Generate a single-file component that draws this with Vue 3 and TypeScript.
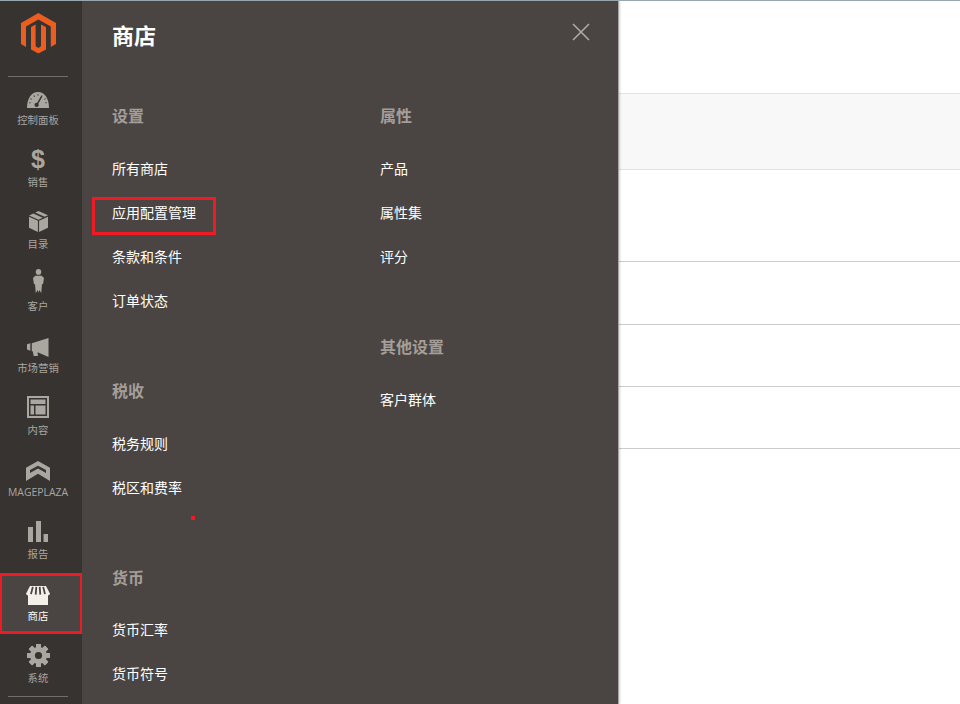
<script setup lang="ts">
const navItems = [
  { key: 'gauge', label: '控制面板', lift: 1 },
  { key: 'dollar', label: '销售', lift: 0 },
  { key: 'box', label: '目录', lift: 1 },
  { key: 'person', label: '客户', lift: 2 },
  { key: 'horn', label: '市场营销', lift: 0 },
  { key: 'layout', label: '内容', lift: 1 },
  { key: 'chevrons', label: 'MAGEPLAZA', lift: 0 },
  { key: 'bars', label: '报告', lift: 1 },
  { key: 'store', label: '商店', lift: 0 },
  { key: 'gear', label: '系统', lift: 0 },
]
const gearTeeth = [0, 45, 90, 135, 180, 225, 270, 315]
const columns = [
  [
    { title: '设置', links: ['所有商店', '应用配置管理', '条款和条件', '订单状态'] },
    { title: '税收', links: ['税务规则', '税区和费率'] },
    { title: '货币', links: ['货币汇率', '货币符号'] },
  ],
  [
    { title: '属性', links: ['产品', '属性集', '评分'] },
    { title: '其他设置', links: ['客户群体'] },
  ],
]
</script>

<template>
  <div class="page">
    <aside class="rail">
      <div class="logo-box">
        <svg class="logo" width="36" height="41" viewBox="21 13 36 41">
          <path fill="#eb5e1f" d="M38.4 13 56 23v21l-5.200 3V26.500l-12.400-7-12.400 7V47l-5-3V23z" />
          <path fill="#eb5e1f" d="M31 27l4.600-2.600V46.300l2.800 1.700 2.600-1.700V24.400l5 2.600V49.500L38.400 53.500 31 49.500z" />
        </svg>
      </div>
      <nav class="nav">
        <a v-for="item in navItems" :key="item.key" class="nav-item" :class="{ active: item.key === 'store' }">
          <span class="icon" :class="`lift-${item.lift}`">
            <svg v-if="item.key === 'gauge'" width="22" height="16" viewBox="0 0 24 18" preserveAspectRatio="none">
              <path fill="#aaa6a0" d="M0 18C0 7 5 0 12 0s12 7 12 18z" />
              <path stroke="#373330" stroke-width="1.200" d="M12 2.500v1.500M7.500 4l.8 1.300M3.800 7.500l1.300 .8M16.500 4l-.8 1.300M20.200 7.500l-1.300 .8M2.500 12h1.500M21.500 12H20" />
              <path stroke="#373330" stroke-width="1.600" d="M11 14 16 5" />
              <circle cx="10.500" cy="14.500" r="2.400" fill="#373330" />
            </svg>
            <span v-else-if="item.key === 'dollar'" class="dollar">$</span>
            <svg v-else-if="item.key === 'box'" width="19" height="21" viewBox="0 0 20 20" preserveAspectRatio="none">
              <path fill="#aaa6a0" d="M10 0 20 4 16.500 5.500 6.500 1.400zM4.500 2.300 14.500 6.500 10 8.300 0 4.300zM0 5.500 9.400 9.400V20L0 16zM10.600 9.400 20 5.500V16L10.600 20z" />
            </svg>
            <svg v-else-if="item.key === 'person'" width="11" height="24" viewBox="0 0 12 25" preserveAspectRatio="none">
              <circle cx="6" cy="3" r="3" fill="#aaa6a0" />
              <path fill="#aaa6a0" d="M2.500 7h7L12 9.500 11 15.500 9.800 16 9 25l-2.200-3L6 25l-.8-3L3 25l-.8-9L1 15.500 0 9.500z" />
            </svg>
            <svg v-else-if="item.key === 'horn'" width="22" height="19" viewBox="0 0 23 18" preserveAspectRatio="none">
              <path fill="#aaa6a0" d="M0 6l3.500-1V12L0 11zM5 5 22.500 0V18L11 13.500 11.500 17H7L6 12.500H5z" />
            </svg>
            <svg v-else-if="item.key === 'layout'" width="22" height="22" viewBox="0 0 22 22">
              <path fill="#aaa6a0" fill-rule="evenodd" d="M0 0h22v22H0zM2 2v18h18V2z" />
              <path fill="#aaa6a0" d="M3.500 3.500h15V8h-15zM3.500 9.500H7v9H3.500zM8.500 9.500h10v9h-10z" />
            </svg>
            <svg v-else-if="item.key === 'chevrons'" width="24" height="20" viewBox="0 0 24 21" preserveAspectRatio="none">
              <path fill="#aaa6a0" d="M12 0 24 7V21L12 13.500 0 21V7zM12 5 4 9.500V12.500L12 8l8 4.500V9.500z" fill-rule="evenodd" />
            </svg>
            <svg v-else-if="item.key === 'bars'" width="20" height="21" viewBox="0 0 20 21">
              <path fill="#aaa6a0" d="M0 6h5v15H0zM8 0h5v21H8zM15.500 13H20v8h-4.500z" />
            </svg>
            <svg v-else-if="item.key === 'store'" width="24" height="19" viewBox="0 0 24 21" preserveAspectRatio="none">
              <path fill="#f4efe9" d="M2 9h20V21H2z" />
              <path fill="#f4efe9" d="M4 0h16l4 8.500c-.5 2-3 2.500-4 1.500-1 1-3 1-4 0-1 1-3 1-4 0-1 1-3 1-4 0-1 1-3 1-4 0-1 1-3.500 .5-4-1.500z" />
              <path stroke="#4a4542" stroke-width="1.800" d="M6.800 1 5 9M10.300 1 9.700 9.500M13.700 1 14.300 9.500M17.200 1 19 9" />
            </svg>
            <svg v-else-if="item.key === 'gear'" width="23" height="23" viewBox="0 0 23 23">
              <g fill="#aaa6a0">
                <rect v-for="a in gearTeeth" :key="a" x="9" y="0" width="5" height="23" rx=".6" :transform="`rotate(${a} 11.500 11.500)`" />
                <circle cx="11.500" cy="11.500" r="8.500" />
              </g>
              <circle cx="11.500" cy="11.500" r="3.600" fill="#373330" />
            </svg>
          </span>
          <span class="nav-label">{{ item.label }}</span>
        </a>
      </nav>
      <div class="rail-rule"></div>
    </aside>

    <section class="panel">
      <header class="panel-head">
        <h1>商店</h1>
        <svg class="close" width="18" height="18" viewBox="0 0 18 18">
          <path stroke="#b3adaa" stroke-width="1.500" d="M1 1l16 16M17 1 1 17" fill="none" />
        </svg>
      </header>
      <div class="panel-cols">
        <div v-for="(col, i) in columns" :key="i" class="col">
          <div v-for="group in col" :key="group.title" class="group">
            <h2>{{ group.title }}</h2>
            <a v-for="link in group.links" :key="link" class="link">
              {{ link }}
              <span v-if="link === '应用配置管理'" class="mark"></span>
            </a>
          </div>
        </div>
      </div>
      <span class="dot"></span>
    </section>

    <main class="content">
      <div class="top"></div>
      <div class="head-row"></div>
      <div class="row r1"></div>
      <div class="row r2"></div>
      <div class="row r3"></div>
      <div class="row r4"></div>
    </main>
  </div>
</template>

<style>
html, body { margin: 0; background: #fff; }
</style>

<style scoped>
.page {
  position: relative;
  display: flex;
  width: 960px;
  height: 704px;
  overflow: hidden;
  box-sizing: border-box;
  border-top: 1px solid #9aa6ad;
  font-family: "Open Sans", "Noto Sans CJK SC", sans-serif;
}
.rail {
  flex: none;
  width: 82px;
  background: #373330;
  display: flex;
  flex-direction: column;
  align-items: stretch;
}
.logo-box {
  height: 76px;
  margin: 0 14px 0 8px;
  width: 60px;
  box-sizing: border-box;
  border-bottom: 1px solid #736e6a;
  display: flex;
  justify-content: center;
  padding-top: 12px;
}
.logo { display: block; margin-left: 1px; }
.nav { display: flex; flex-direction: column; }
.nav-item {
  height: 62px;
  box-sizing: border-box;
  display: flex;
  flex-direction: column;
  align-items: center;
  color: #aaa6a0;
  padding-right: 6px;
}
.nav-item.active {
  background: #4a4542;
  color: #fff;
  border: 2px solid #ed1c24;
  border-top-width: 3px;
  border-bottom-width: 3px;
  height: 61px;
  margin-bottom: 1px;
  width: 82px;
  padding-right: 6px;
}
.nav-item.active .icon { height: 29px; }
.icon {
  height: 32px;
  display: flex;
  align-items: flex-end;
  justify-content: center;
  box-sizing: border-box;
}
.lift-1 { padding-bottom: 1px; }
.lift-2 { padding-bottom: 2px; }
.dollar {
  font: bold 25px/23px "Liberation Sans", sans-serif;
  color: #aaa6a0;
}
.nav-label {
  font-size: 10.400px;
  line-height: 14px;
  margin-top: 4px;
  white-space: nowrap;
}
.rail-rule {
  width: 60px;
  height: 1px;
  margin: -1px 0 0 8px;
  background: #736e6a;
}
.panel {
  position: relative;
  flex: none;
  width: 537px;
  box-sizing: border-box;
  background: #4a4542;
  padding-left: 30px;
  color: #fff;
  border-right: 1px solid #a6a6a6;
  box-shadow: 1px 0 2px rgba(0, 0, 0, .18);
  z-index: 1;
}
.panel-head {
  height: 72px;
  display: flex;
  justify-content: space-between;
  align-items: flex-start;
}
h1 {
  margin: 19px 0 0;
  font-size: 22px;
  line-height: 30px;
  font-weight: 700;
}
.close { margin: 22px 28px 0 0; }
.panel-cols { display: flex; }
.col { flex: none; width: 268px; }
.group { padding-top: 32px; margin-bottom: 24px; }
.group:first-child { padding-top: 31px; }
.group:nth-child(3) h2 { margin-bottom: 18px; }
h2 {
  margin: 0 0 19px;
  font-size: 16px;
  line-height: 24px;
  font-weight: 700;
  color: #a39e99;
}
.link {
  position: relative;
  display: block;
  height: 44px;
  line-height: 44px;
  font-size: 14px;
  color: #fff;
}
.mark {
  position: absolute;
  left: -20px;
  top: 6px;
  width: 124px;
  height: 38px;
  box-sizing: border-box;
  border: 3px solid #ed1c24;
}
.dot {
  position: absolute;
  left: 109px;
  top: 515px;
  width: 4px;
  height: 4px;
  background: #ed1c24;
}
.content { flex: 1; display: flex; flex-direction: column; }
.top { height: 92px; }
.head-row {
  height: 77px;
  box-sizing: border-box;
  background: #f8f8f8;
  border-top: 1px solid #e3e3e3;
  border-bottom: 1px solid #e3e3e3;
}
.row { box-sizing: border-box; border-bottom: 1px solid #cccccc; }
.r1 { height: 92px; }
.r2 { height: 63px; }
.r3 { height: 62px; }
.r4 { height: 62px; }
</style>
